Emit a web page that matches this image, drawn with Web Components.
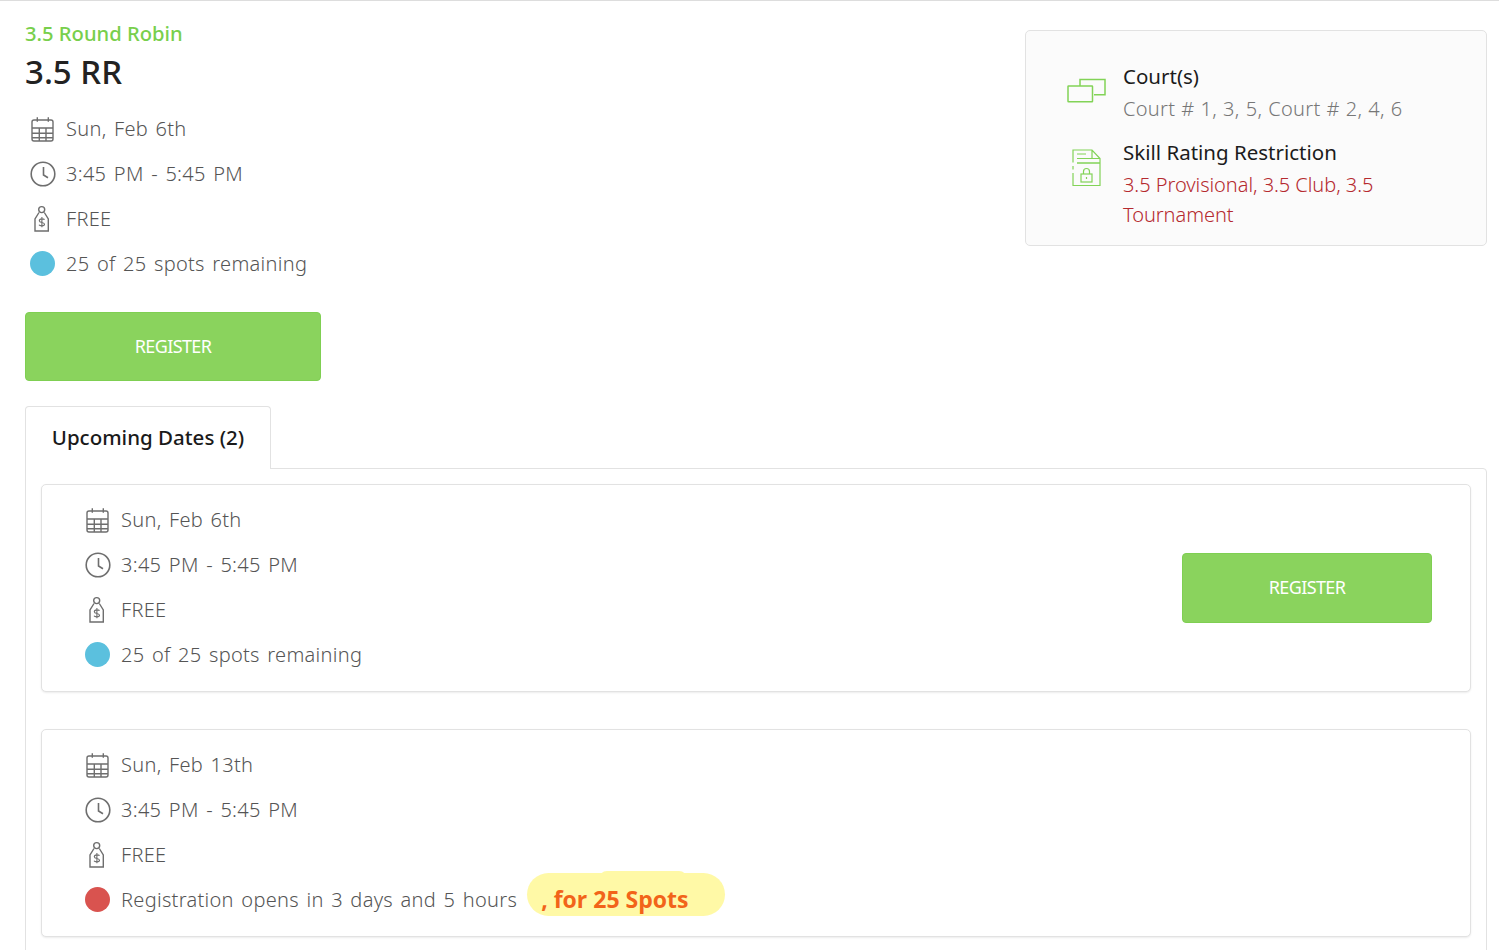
<!DOCTYPE html>
<html>
<head>
<meta charset="utf-8">
<style>
html, body { margin: 0; padding: 0; background: #fff; }
body { font-family: "Noto Sans", "Liberation Sans", sans-serif; color: #666; overflow: hidden; height: 950px; }
</style>
</head>
<body>
<event-page></event-page>
<script>
const ICONS = {
    calendar: `<svg width="25" height="26" viewBox="0 0 25 26" fill="none" stroke="#6e6e6e" stroke-width="1.4"><rect x="2" y="4" width="21" height="21" rx="2"/><path d="M7.300 1.300v4.500M18.300 1.300v4.500M2 12h21M2 17.300h21M2 21.700h21M9.300 12v13M16 12v13"/></svg>`,
    clock: `<svg width="26" height="26" viewBox="0 0 26 26" fill="none" stroke="#6e6e6e" stroke-width="1.6"><circle cx="13" cy="13" r="11.800"/><path d="M13.500 6v8l4.500 2.800"/></svg>`,
    tag: `<svg width="25" height="27" viewBox="0 0 25 27" fill="none" stroke="#6e6e6e" stroke-width="1.4"><circle cx="11.700" cy="4.600" r="3"/><path d="M9 7.500L5 14v12h13.300V14l-4-6.500"/><path d="M14.500 14.800c-.6-1.300-5.200-1.400-5.200.9 0 2.400 5.200 1.300 5.200 3.600 0 2.200-4.900 1.800-5.500.5M11.900 12v10.200" stroke-width="1.100"/></svg>`,
    courts: `<svg width="40" height="27" viewBox="0 0 40 27" fill="none" stroke="#82d357" stroke-width="1.500"><path d="M13 8V1.500h25v15.300H27"/><rect x="1" y="8" width="24.500" height="15.800" rx=".5"/></svg>`,
    lock: `<svg width="30" height="38" viewBox="0 0 30 38" fill="none" stroke="#82d357" stroke-width="1.200"><path d="M1 13.500V1h19l8 8.500V36.500H1V24M1 17v3.500M20 1v8.500h8"/><path d="M5 5h9M5 9.500h17" /><path d="M5 14h23" stroke-width="1.500"/><rect x="9" y="25" width="11" height="8"/><path d="M11.500 25v-2.500a3 3 0 0 1 6 0V25M14.500 28v2"/></svg>`
}

class InfoRow extends HTMLElement {
    constructor(){
        super();
        this.attachShadow({mode: 'open'})
    }
    connectedCallback(){
        const icon = this.getAttribute('icon')
        const dot = this.getAttribute('dot')
        const mark = dot ? `<span class="dot" style="background:${dot}"></span>` : ICONS[icon]
        this.shadowRoot.innerHTML = `
            <style>
            :host { display: flex; align-items: center; height: 45px; font-size: 20px; font-weight: 300; letter-spacing: .3px; word-spacing: 2px; color: #555; white-space: nowrap; }
            .mark { width: 36px; margin-left: 5px; flex: none; display: flex; }
            .mark svg, .dot { display: block; }
            .dot { width: 25px; height: 25px; border-radius: 50%; }
            </style>
            <span class="mark">${mark}</span><slot></slot>
        `
    }
}

class InfoList extends HTMLElement {
    constructor(){
        super();
        this.attachShadow({mode: 'open'})
        this.shadowRoot.innerHTML = `<style>:host { display: block; }</style><slot></slot>`
    }
}

class RegisterButton extends HTMLElement {
    constructor(){
        super();
        this.attachShadow({mode: 'open'})
        this.shadowRoot.innerHTML = `
            <style>
            :host { display: flex; align-items: center; justify-content: center; box-sizing: border-box; padding-bottom: 2px;
                background: #8ad35d; border: 1px solid #7fcf52; border-radius: 4px; color: #fff; font-size: 18px; letter-spacing: -.6px; }
            </style>
            <slot>REGISTER</slot>
        `
    }
}

class DateCard extends HTMLElement {
    constructor(){
        super();
        this.attachShadow({mode: 'open'})
        this.shadowRoot.innerHTML = `
            <style>
            :host { display: flex; align-items: center; justify-content: space-between; box-sizing: border-box; height: 208px;
                padding: 0 38px; background: #fff; border: 1px solid #e2e2e2; border-radius: 5px; box-shadow: 0 1px 2px rgba(0,0,0,.08); }
            ::slotted(info-list) { margin-bottom: 2px; }
            ::slotted(register-button) { width: 250px; height: 70px; }
            </style>
            <slot></slot>
        `
    }
}

class SideBox extends HTMLElement {
    constructor(){
        super();
        this.attachShadow({mode: 'open'})
        this.shadowRoot.innerHTML = `
            <style>
            :host { display: block; box-sizing: border-box; width: 462px; height: 216px; margin-top: 29px; padding: 30px 40px 0 41px;
                background: #fbfbfb; border: 1px solid #e2e2e2; border-radius: 5px; font-size: 20px; font-weight: 300; white-space: nowrap; }
            .item { display: flex; gap: 16px; }
            .item + .item { margin-top: 12px; }
            .ic { width: 40px; flex: none; padding-top: 17px; }
            .item + .item .ic { padding-top: 12px; padding-left: 5px; width: 35px; }
            .head { color: #1c1c1c; height: 30px; line-height: 30px; font-weight: 400; font-size: 20.500px; }
            .body { color: #777; line-height: 30.500px; margin-top: 3px; letter-spacing: .3px; word-spacing: .5px; }
            .red { color: #b52a2f; letter-spacing: -.05px; word-spacing: 0; }
            </style>
            <div class="item"><div class="ic">${ICONS.courts}</div><div><div class="head">Court(s)</div><div class="body">Court # 1, 3, 5, Court # 2, 4, 6</div></div></div>
            <div class="item"><div class="ic">${ICONS.lock}</div><div><div class="head">Skill Rating Restriction</div><div class="body red">3.5 Provisional, 3.5 Club, 3.5<br>Tournament</div></div></div>
        `
    }
}

class SpotNote extends HTMLElement {
    constructor(){
        super();
        this.attachShadow({mode: 'open'})
        this.shadowRoot.innerHTML = `
            <style>
            :host { display: inline-block; position: relative; box-sizing: border-box; width: 198px; height: 43px; line-height: 52px; padding-left: 14px; margin-left: 10px; vertical-align: middle;
                transform: translateY(-5px); background: #fff9a6; border-radius: 22px; color: #f26419; font-family: "Open Sans", sans-serif; font-weight: 700; font-size: 23px; letter-spacing: 0; word-spacing: 0; }
            :host::before { content: ""; position: absolute; left: 72px; top: -2px; width: 88px; height: 12px; border-radius: 8px 8px 0 0; background: #fff9a6; z-index: -1; }
            </style>
            <slot></slot>
        `
    }
}

class EventPage extends HTMLElement {
    constructor(){
        super();
        this.attachShadow({mode: 'open'})
        this.shadowRoot.innerHTML = `
            <style>
            :host { display: block; border-top: 1px solid #ddd; padding: 0 12px 0 25px; }
            .top { display: flex; justify-content: space-between; align-items: flex-start; }
            .kind { color: #78cf4c; font-size: 20.200px; font-weight: 500; line-height: 26px; margin-top: 19px; }
            h1 { margin: 4px 0 12px; color: #222; font-size: 33px; line-height: 44px; font-weight: 500; }
            .main register-button { width: 296px; height: 69px; margin-top: 26px; }
            .tab { display: inline-block; box-sizing: border-box; width: 246px; height: 63px; margin-top: 25px; margin-bottom: -1px; padding-top: 16px; text-align: center;
                border: 1px solid #e2e2e2; border-bottom: 0; border-radius: 4px 4px 0 0; color: #1a1a1a; font-size: 20.500px; font-weight: 500; position: relative; background: #fff; }
            .panel { border: 1px solid #e2e2e2; border-radius: 0 4px 0 0; padding: 15px 15px 40px; display: flex; flex-direction: column; gap: 37px; }
            </style>
            <div class="top">
                <div class="main">
                    <div class="kind">3.5 Round Robin</div>
                    <h1>3.5 RR</h1>
                    <info-list>
                        <info-row icon="calendar">Sun, Feb 6th</info-row>
                        <info-row icon="clock">3:45 PM - 5:45 PM</info-row>
                        <info-row icon="tag">FREE</info-row>
                        <info-row dot="#5bc0de">25 of 25 spots remaining</info-row>
                    </info-list>
                    <register-button>REGISTER</register-button>
                </div>
                <side-box></side-box>
            </div>
            <div class="tab">Upcoming Dates (2)</div>
            <div class="panel">
                <date-card>
                    <info-list>
                        <info-row icon="calendar">Sun, Feb 6th</info-row>
                        <info-row icon="clock">3:45 PM - 5:45 PM</info-row>
                        <info-row icon="tag">FREE</info-row>
                        <info-row dot="#5bc0de">25 of 25 spots remaining</info-row>
                    </info-list>
                    <register-button>REGISTER</register-button>
                </date-card>
                <date-card>
                    <info-list>
                        <info-row icon="calendar">Sun, Feb 13th</info-row>
                        <info-row icon="clock">3:45 PM - 5:45 PM</info-row>
                        <info-row icon="tag">FREE</info-row>
                        <info-row dot="#d9534f">Registration opens in 3 days and 5 hours <spot-note>, for 25 Spots</spot-note></info-row>
                    </info-list>
                </date-card>
            </div>
        `
    }
}

customElements.define('info-row', InfoRow)
customElements.define('info-list', InfoList)
customElements.define('register-button', RegisterButton)
customElements.define('date-card', DateCard)
customElements.define('side-box', SideBox)
customElements.define('spot-note', SpotNote)
customElements.define('event-page', EventPage)
</script>
</body>
</html>
